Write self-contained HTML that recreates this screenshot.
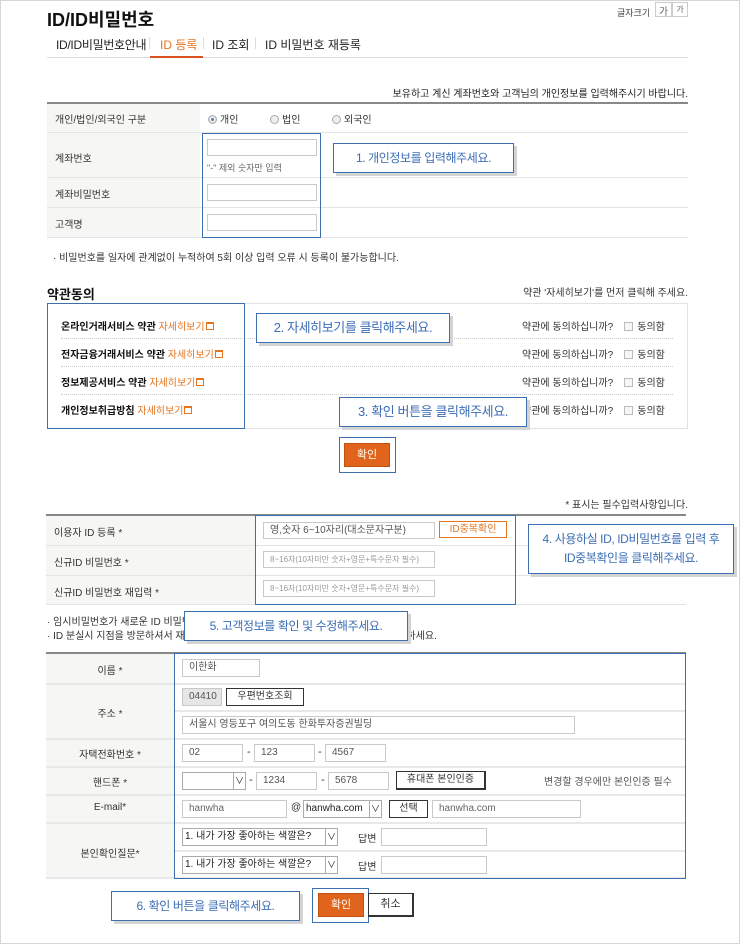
<!DOCTYPE html>
<html><head><meta charset="utf-8"><style>
*{margin:0;padding:0;box-sizing:border-box}
body{width:740px;height:944px;background:#fff;font-family:"Liberation Sans","Noto Sans CJK KR",sans-serif;font-size:11px;color:#333;position:relative;overflow:hidden}
.a{position:absolute;white-space:nowrap}
.outer{position:absolute;left:0;top:0;width:740px;height:944px;border:1px solid #d6d6d6}
.lbl{position:absolute;background:#f6f6f4}
.hl{position:absolute;height:1px;background:#e4e4e4}
.inp{position:absolute;border:1px solid #c9c9c9;background:#fff;height:17px;font-size:10px;color:#777;padding-left:6px;line-height:16px;white-space:nowrap}
.blue{position:absolute;border:1px solid #3d6fb0}
.call{position:absolute;border:1px solid #3d6fb0;background:#fff;box-shadow:3px 3px 0 #d4d4d4;color:#3b6db5;font-size:12px;letter-spacing:-0.4px;text-align:center;white-space:nowrap}
.or{color:#e5741f}
.cb{display:inline-block;width:9px;height:9px;border:1px solid #bbb;background:#f6f6f6;vertical-align:-1px;margin-right:4px}
.rd{display:inline-block;width:9px;height:9px;border:1px solid #aaa;border-radius:50%;background:#eee;vertical-align:-1px;margin-right:3px}
.btn{position:absolute;border:1px solid #333;background:#fff;font-size:10px;text-align:center;line-height:16px;height:17px}
.sel{position:absolute;border:1px solid #aaa;background:#fff;height:17px;font-size:10px;line-height:16px;padding-left:2px;color:#222}
.sel i{position:absolute;right:0;top:0;width:12px;height:16px;border-left:1px solid #aaa;font-style:normal;text-align:center;font-size:9px;line-height:16px}
.ext{display:inline-block;width:8px;height:8px;border:1px solid #e5741f;border-top-width:2px;margin-left:1px}
</style></head><body>
<div class="outer"></div>
<div class="a" style="left:47px;top:6px;font-size:18px;font-weight:bold;color:#111">ID/ID비밀번호</div>
<div class="a" style="left:617px;top:6px;font-size:9px;color:#444">글자크기</div>
<div class="a" style="left:655px;top:2px;width:17px;height:15px;border:1px solid #ccc;font-size:10px;text-align:center;color:#666">가</div>
<div class="a" style="left:672px;top:2px;width:16px;height:15px;border:1px solid #ccc;font-size:8px;text-align:center;line-height:13px;color:#666">가</div>
<div class="a" style="left:56px;top:36px;font-size:12px;color:#222;letter-spacing:-0.3px">ID/ID비밀번호안내</div>
<div class="a" style="left:149px;top:37px;width:1px;height:12px;background:#ddd"></div>
<div class="a" style="left:160px;top:36px;font-size:12px;color:#e5741f">ID 등록</div>
<div class="a" style="left:203px;top:37px;width:1px;height:12px;background:#ddd"></div>
<div class="a" style="left:212px;top:36px;font-size:12px;color:#222">ID 조회</div>
<div class="a" style="left:255px;top:37px;width:1px;height:12px;background:#ddd"></div>
<div class="a" style="left:265px;top:36px;font-size:12px;color:#222">ID 비밀번호 재등록</div>
<div class="a" style="left:47px;top:57px;width:641px;height:1px;background:#ddd"></div>
<div class="a" style="left:150px;top:56px;width:53px;height:2px;background:#d9531e"></div>

<div class="a" style="right:52px;top:85px;font-size:10px;color:#222">보유하고 계신 계좌번호와 고객님의 개인정보를 입력해주시기 바랍니다.</div>
<div class="a" style="left:47px;top:102px;width:641px;height:2px;background:#888"></div>
<div class="lbl" style="left:47px;top:104px;width:153px;height:133px"></div>
<div class="hl" style="left:47px;top:132px;width:641px"></div>
<div class="hl" style="left:47px;top:177px;width:641px"></div>
<div class="hl" style="left:47px;top:207px;width:641px"></div>
<div class="hl" style="left:47px;top:237px;width:641px"></div>
<div class="a" style="left:55px;top:111px;font-size:10px">개인/법인/외국인 구분</div>
<div class="a" style="left:55px;top:150px;font-size:10px">계좌번호</div>
<div class="a" style="left:55px;top:186px;font-size:10px">계좌비밀번호</div>
<div class="a" style="left:55px;top:216px;font-size:10px">고객명</div>
<div class="a" style="left:208px;top:111px;font-size:10px"><span class="rd" style="background:#5a7fb5;box-shadow:inset 0 0 0 2px #eee"></span>개인</div>
<div class="a" style="left:270px;top:111px;font-size:10px"><span class="rd"></span>법인</div>
<div class="a" style="left:332px;top:111px;font-size:10px"><span class="rd"></span>외국인</div>
<div class="inp" style="left:207px;top:139px;width:110px"></div>
<div class="a" style="left:207px;top:161px;font-size:9px;color:#666">"-" 제외 숫자만 입력</div>
<div class="inp" style="left:207px;top:184px;width:110px"></div>
<div class="inp" style="left:207px;top:214px;width:110px"></div>
<div class="blue" style="left:202px;top:133px;width:119px;height:105px"></div>
<div class="call" style="left:333px;top:143px;width:181px;height:30px;line-height:28px">1. 개인정보를 입력해주세요.</div>
<div class="a" style="left:53px;top:249px;font-size:10px;color:#333">· 비밀번호를 일자에 관계없이 누적하여 5회 이상 입력 오류 시 등록이 불가능합니다.</div>

<div class="a" style="left:47px;top:284px;font-size:13px;font-weight:bold;color:#111">약관동의</div>
<div class="a" style="right:52px;top:284px;font-size:10px">약관 '자세히보기'를 먼저 클릭해 주세요.</div>
<div class="a" style="left:47px;top:303px;width:641px;height:126px;border:1px solid #e2e2e2"></div>
<div class="a" style="left:61px;top:338px;width:612px;border-top:1px dotted #ccc"></div>
<div class="a" style="left:61px;top:366px;width:612px;border-top:1px dotted #ccc"></div>
<div class="a" style="left:61px;top:394px;width:612px;border-top:1px dotted #ccc"></div>
<div class="a" style="left:61px;top:318px;font-size:10px;font-weight:bold;color:#111">온라인거래서비스 약관 <span class="or" style="font-weight:normal">자세히보기</span><span class="ext"></span></div>
<div class="a" style="left:61px;top:346px;font-size:10px;font-weight:bold;color:#111">전자금융거래서비스 약관 <span class="or" style="font-weight:normal">자세히보기</span><span class="ext"></span></div>
<div class="a" style="left:61px;top:374px;font-size:10px;font-weight:bold;color:#111">정보제공서비스 약관 <span class="or" style="font-weight:normal">자세히보기</span><span class="ext"></span></div>
<div class="a" style="left:61px;top:402px;font-size:10px;font-weight:bold;color:#111">개인정보취급방침 <span class="or" style="font-weight:normal">자세히보기</span><span class="ext"></span></div>
<div class="a" style="left:522px;top:318px;font-size:10px">약관에 동의하십니까? &nbsp;&nbsp;&nbsp;<span class="cb"></span>동의함</div>
<div class="a" style="left:522px;top:346px;font-size:10px">약관에 동의하십니까? &nbsp;&nbsp;&nbsp;<span class="cb"></span>동의함</div>
<div class="a" style="left:522px;top:374px;font-size:10px">약관에 동의하십니까? &nbsp;&nbsp;&nbsp;<span class="cb"></span>동의함</div>
<div class="a" style="left:522px;top:402px;font-size:10px">약관에 동의하십니까? &nbsp;&nbsp;&nbsp;<span class="cb"></span>동의함</div>
<div class="blue" style="left:47px;top:303px;width:198px;height:126px"></div>
<div class="call" style="left:256px;top:313px;width:194px;height:30px;line-height:28px;font-size:13px">2. 자세히보기를 클릭해주세요.</div>
<div class="call" style="left:339px;top:397px;width:188px;height:30px;line-height:28px;font-size:13px">3. 확인 버튼을 클릭해주세요.</div>
<div class="blue" style="left:339px;top:437px;width:57px;height:36px"></div>
<div class="a" style="left:344px;top:443px;width:46px;height:24px;background:#e0641b;border:1px solid #c0500f;color:#fff;font-size:11px;text-align:center;line-height:22px">확인</div>

<div class="a" style="right:52px;top:496px;font-size:10px">* 표시는 필수입력사항입니다.</div>
<div class="a" style="left:46px;top:514px;width:640px;height:2px;background:#888"></div>
<div class="lbl" style="left:46px;top:516px;width:209px;height:88px"></div>
<div class="hl" style="left:46px;top:545px;width:640px"></div>
<div class="hl" style="left:46px;top:575px;width:640px"></div>
<div class="hl" style="left:46px;top:604px;width:640px"></div>
<div class="a" style="left:54px;top:524px;font-size:10px">이용자 ID 등록 *</div>
<div class="a" style="left:54px;top:554px;font-size:10px">신규ID 비밀번호 *</div>
<div class="a" style="left:54px;top:584px;font-size:10px">신규ID 비밀번호 재입력 *</div>
<div class="inp" style="left:263px;top:522px;width:172px;font-size:10px;color:#555">영,숫자 6~10자리(대소문자구분)</div>
<div class="a" style="left:439px;top:521px;width:68px;height:17px;border:1px solid #e5741f;color:#e5741f;font-size:10px;text-align:center;line-height:15px">ID중복확인</div>
<div class="inp" style="left:263px;top:551px;width:172px;font-size:8px;color:#999">8~16자(10자미만 숫자+영문+특수문자 필수)</div>
<div class="inp" style="left:263px;top:580px;width:172px;font-size:8px;color:#999">8~16자(10자미만 숫자+영문+특수문자 필수)</div>
<div class="blue" style="left:255px;top:515px;width:261px;height:90px"></div>
<div class="call" style="left:528px;top:524px;width:206px;height:50px;line-height:19px;padding-top:5px">4. 사용하실 ID, ID비밀번호를 입력 후<br>ID중복확인을 클릭해주세요.</div>

<div class="a" style="left:47px;top:613px;font-size:10px">· 임시비밀번호가 새로운 ID 비밀번호로 변경됩니다.</div>
<div class="a" style="left:47px;top:627px;font-size:10px">· ID 분실시 지점을 방문하셔서 재등록 하시기 바랍니다. 자세한 내용은 고객센터로 문의하세요.</div>
<div class="call" style="left:184px;top:611px;width:224px;height:30px;line-height:28px">5. 고객정보를 확인 및 수정해주세요.</div>

<div class="a" style="left:46px;top:652px;width:640px;height:2px;background:#888"></div>
<div class="lbl" style="left:46px;top:654px;width:128px;height:224px"></div>
<div class="a" style="left:46px;top:683px;width:640px;height:2px;background:#e8e8e8"></div>
<div class="a" style="left:174px;top:710px;width:512px;height:2px;background:#e8e8e8"></div>
<div class="a" style="left:46px;top:738px;width:640px;height:2px;background:#e8e8e8"></div>
<div class="a" style="left:46px;top:766px;width:640px;height:2px;background:#e8e8e8"></div>
<div class="a" style="left:46px;top:794px;width:640px;height:2px;background:#e8e8e8"></div>
<div class="a" style="left:46px;top:822px;width:640px;height:2px;background:#e8e8e8"></div>
<div class="a" style="left:174px;top:850px;width:512px;height:2px;background:#e8e8e8"></div>
<div class="a" style="left:46px;top:877px;width:640px;height:2px;background:#e8e8e8"></div>
<div class="a" style="left:46px;top:662px;width:128px;text-align:center;font-size:10px">이름 *</div>
<div class="a" style="left:46px;top:705px;width:128px;text-align:center;font-size:10px">주소 *</div>
<div class="a" style="left:46px;top:746px;width:128px;text-align:center;font-size:10px">자택전화번호 *</div>
<div class="a" style="left:46px;top:774px;width:128px;text-align:center;font-size:10px">핸드폰 *</div>
<div class="a" style="left:46px;top:802px;width:128px;text-align:center;font-size:10px">E-mail*</div>
<div class="a" style="left:46px;top:845px;width:128px;text-align:center;font-size:10px">본인확인질문*</div>

<div class="inp" style="left:182px;top:659px;width:78px;height:18px;color:#555">이한화</div>
<div class="inp" style="left:182px;top:688px;width:40px;height:18px;background:#e6e6e6;color:#555">04410</div>
<div class="btn" style="left:226px;top:688px;width:78px;height:18px">우편번호조회</div>
<div class="inp" style="left:182px;top:716px;width:393px;height:18px;color:#555">서울시 영등포구 여의도동 한화투자증권빌딩</div>
<div class="inp" style="left:182px;top:744px;width:61px;height:18px;color:#555">02</div>
<div class="a" style="left:247px;top:746px">-</div>
<div class="inp" style="left:254px;top:744px;width:61px;height:18px;color:#555">123</div>
<div class="a" style="left:318px;top:746px">-</div>
<div class="inp" style="left:325px;top:744px;width:61px;height:18px;color:#555">4567</div>
<div class="sel" style="left:182px;top:772px;width:64px;height:18px"><i>∨</i></div>
<div class="a" style="left:249px;top:774px">-</div>
<div class="inp" style="left:256px;top:772px;width:61px;height:18px;color:#555">1234</div>
<div class="a" style="left:321px;top:774px">-</div>
<div class="inp" style="left:328px;top:772px;width:61px;height:18px;color:#555">5678</div>
<div class="btn" style="left:396px;top:771px;width:90px;height:19px;border-width:1px 2px 2px 1px">휴대폰 본인인증</div>
<div class="a" style="left:544px;top:773px;font-size:10px;color:#555">변경할 경우에만 본인인증 필수</div>
<div class="inp" style="left:182px;top:800px;width:105px;height:18px;color:#666">hanwha</div>
<div class="a" style="left:291px;top:802px;font-size:10px">@</div>
<div class="sel" style="left:303px;top:800px;width:79px;height:18px;font-size:10px">hanwha.com<i>∨</i></div>
<div class="btn" style="left:389px;top:800px;width:39px;height:18px">선택</div>
<div class="inp" style="left:432px;top:800px;width:149px;height:18px;color:#666">hanwha.com</div>
<div class="sel" style="left:182px;top:828px;width:156px;height:18px">1. 내가 가장 좋아하는 색깔은?<i>∨</i></div>
<div class="a" style="left:358px;top:830px;font-size:10px">답변</div>
<div class="inp" style="left:381px;top:828px;width:106px;height:18px"></div>
<div class="sel" style="left:182px;top:856px;width:156px;height:18px">1. 내가 가장 좋아하는 색깔은?<i>∨</i></div>
<div class="a" style="left:358px;top:858px;font-size:10px">답변</div>
<div class="inp" style="left:381px;top:856px;width:106px;height:18px"></div>
<div class="blue" style="left:174px;top:653px;width:512px;height:226px"></div>

<div class="call" style="left:111px;top:891px;width:189px;height:30px;line-height:28px">6. 확인 버튼을 클릭해주세요.</div>
<div class="blue" style="left:312px;top:888px;width:57px;height:35px"></div>
<div class="a" style="left:318px;top:893px;width:46px;height:24px;background:#e0641b;border:1px solid #c0500f;color:#fff;font-size:11px;text-align:center;line-height:22px">확인</div>
<div class="a" style="left:368px;top:893px;width:46px;height:24px;border:1px solid #333;border-width:1px 2px 2px 1px;font-size:11px;text-align:center;line-height:21px">취소</div>
</body></html>
